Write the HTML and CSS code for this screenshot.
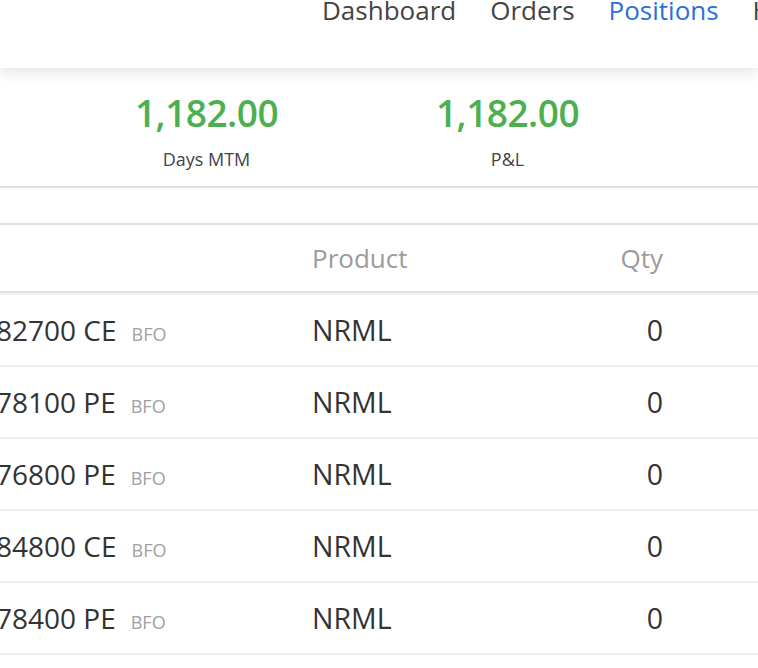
FILE: index.html
```html
<!DOCTYPE html>
<html lang="en">
<head>
<meta charset="utf-8">
<title>Positions</title>
<link rel="stylesheet" href="styles.css">
</head>
<body>
<header class="topbar">
  <nav class="nav">
    <a class="nav-item">Dashboard</a>
    <a class="nav-item">Orders</a>
    <a class="nav-item active">Positions</a>
    <a class="nav-item">Holdings</a>
  </nav>
</header>

<section class="stats">
  <div class="stat">
    <div class="stat-value">1,182.00</div>
    <div class="stat-label">Days MTM</div>
  </div>
  <div class="stat">
    <div class="stat-value">1,182.00</div>
    <div class="stat-label">P&amp;L</div>
  </div>
</section>

<div class="spacer"></div>

<div class="table">
  <div class="row head">
    <div class="cell inst"></div>
    <div class="cell product">Product</div>
    <div class="cell qty">Qty</div>
    <div class="cell rest"></div>
  </div>
  <div class="body">
    <div class="row">
      <div class="cell inst"><span class="name">82700 CE</span><span class="exch">BFO</span></div>
      <div class="cell product">NRML</div>
      <div class="cell qty">0</div>
      <div class="cell rest"></div>
    </div>
    <div class="row">
      <div class="cell inst"><span class="name">78100 PE</span><span class="exch">BFO</span></div>
      <div class="cell product">NRML</div>
      <div class="cell qty">0</div>
      <div class="cell rest"></div>
    </div>
    <div class="row">
      <div class="cell inst"><span class="name">76800 PE</span><span class="exch">BFO</span></div>
      <div class="cell product">NRML</div>
      <div class="cell qty">0</div>
      <div class="cell rest"></div>
    </div>
    <div class="row">
      <div class="cell inst"><span class="name">84800 CE</span><span class="exch">BFO</span></div>
      <div class="cell product">NRML</div>
      <div class="cell qty">0</div>
      <div class="cell rest"></div>
    </div>
    <div class="row">
      <div class="cell inst"><span class="name">78400 PE</span><span class="exch">BFO</span></div>
      <div class="cell product">NRML</div>
      <div class="cell qty">0</div>
      <div class="cell rest"></div>
    </div>
  </div>
</div>
</body>
</html>
```

FILE: styles.css
```css
* { box-sizing: border-box; }

html, body {
  margin: 0;
  padding: 0;
  background: #ffffff;
  overflow: hidden;
}

body {
  font-family: "Open Sans", "DejaVu Sans", sans-serif;
  color: #333333;
  width: 758px;
  height: 668px;
}

.topbar {
  height: 68px;
  background: #ffffff;
  box-shadow: 0 3px 14px rgba(0, 0, 0, 0.13);
  position: relative;
  z-index: 2;
}

.nav {
  display: flex;
  gap: 34px;
  padding-left: 322px;
  white-space: nowrap;
}

.nav-item {
  font-size: 26px;
  line-height: 21px;
  color: #444444;
  text-decoration: none;
}

.nav-item.active {
  color: #2b6fdc;
}

.stats {
  display: grid;
  grid-template-columns: 301px 301px;
  padding-left: 56px;
  padding-top: 23px;
  padding-bottom: 15px;
  border-bottom: 2px solid #e1e1e1;
}

.stat {
  text-align: center;
}

.stat-value {
  font-size: 37px;
  line-height: 44px;
  font-weight: 600;
  color: #4caf50;
  letter-spacing: -0.5px;
}

.stat-label {
  margin-top: 12px;
  font-size: 18px;
  line-height: 24px;
  color: #444444;
}

.spacer {
  height: 37px;
  border-bottom: 2px solid #e1e1e1;
}

.row {
  display: grid;
  grid-template-columns: 312px 200px 151px 1fr;
  height: 72px;
  border-bottom: 2px solid #eeeeee;
}

.row.head {
  height: 68px;
  border-bottom: 2px solid #e1e1e1;
}

.body {
  border-top: 2px solid #f3f3f3;
}

.cell {
  white-space: nowrap;
  overflow: visible;
}

.head .cell {
  font-size: 26px;
  line-height: 66px;
  color: #9b9b9b;
}

.body .cell {
  font-size: 28.5px;
  line-height: 70px;
  color: #333333;
}

.qty {
  text-align: right;
}

.inst .name {
  font-size: 28px;
  margin-left: -4px;
}

.body .inst .exch {
  font-size: 18px;
  color: #a0a0a0;
  margin-left: 15px;
}
```
